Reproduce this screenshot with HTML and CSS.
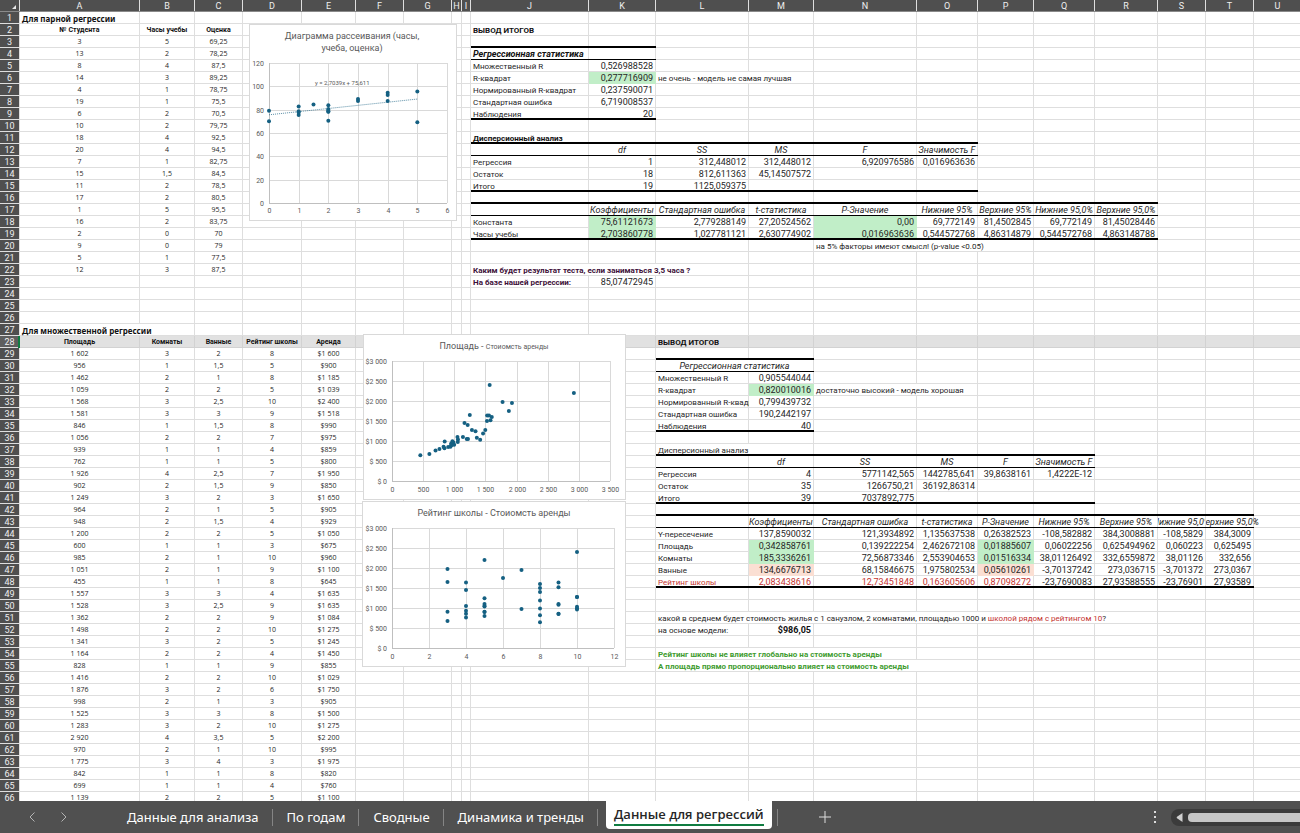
FILE: index.html
```html
<!DOCTYPE html>
<html lang="ru">
<head>
<meta charset="utf-8">
<title>Данные для регрессий</title>
<link rel="stylesheet" href="styles.css">
</head>
<body>
<div class="workbook">
  <main class="sheet">
    <table class="grid">
      <colgroup id="cols"></colgroup>
      <thead><tr id="letters"></tr></thead>
      <tbody id="rows"></tbody>
    </table>
    <svg class="chart chart-study" id="chart-study" width="208" height="197" role="img" aria-label="Диаграмма рассеивания"></svg>
    <svg class="chart chart-area" id="chart-area" width="263" height="166" role="img" aria-label="Площадь и аренда"></svg>
    <svg class="chart chart-rating" id="chart-rating" width="264" height="166" role="img" aria-label="Рейтинг школы и аренда"></svg>
  </main>
  <footer class="bar">
    <div class="arrows">
      <button class="arrow" aria-label="Назад"><svg width="8" height="12" viewBox="0 0 8 12"><path d="M6.500 1.500L2 6l4.500 4.500"/></svg></button>
      <button class="arrow" aria-label="Вперёд"><svg width="8" height="12" viewBox="0 0 8 12"><path d="M1.500 1.500L6 6l-4.500 4.500"/></svg></button>
    </div>
    <div class="tabs" role="tablist">
      <button class="tab" role="tab">Данные для анализа</button>
      <button class="tab" role="tab">По годам</button>
      <button class="tab" role="tab">Сводные</button>
      <button class="tab" role="tab">Динамика и тренды</button>
      <button class="tab-active" role="tab" aria-selected="true"><span class="tab-label">Данные для регрессий</span></button>
    </div>
    <button class="add" aria-label="Новый лист"><svg width="12" height="12" viewBox="0 0 12 12"><path d="M6 0v12M0 6h12"/></svg></button>
    <div class="dots"><i></i><i></i><i></i></div>
    <div class="scroll">
      <svg width="7" height="9" viewBox="0 0 7 9"><path d="M6.500 0v9L1 5.200Q.3 4.500 1 3.800z"/></svg>
      <div class="thumb"></div>
    </div>
  </footer>
</div>
<script src="script.js"></script>
</body>
</html>
```
FILE: styles.css
```css
* { box-sizing: border-box; }
body { margin: 0; font-family: Roboto, "Liberation Sans", sans-serif; color: #262626; background: #fff; }
button { border: 0; padding: 0; background: none; color: inherit; font: inherit; }
.workbook { display: flex; flex-direction: column; height: 100vh; overflow: hidden; }
.sheet { position: relative; flex: 1; min-height: 0; overflow: hidden; }

.grid { table-layout: fixed; width: 1302px; border-collapse: separate; border-spacing: 0; font: 8px/11px Roboto, sans-serif; }
.grid th, .grid td {
  --line: #dedede;
  --rule: var(--line);
  --weight: 1px;
  height: 12px; padding: 1px 1px 0 2px; overflow: hidden; white-space: nowrap;
  background-image: linear-gradient(var(--rule), var(--rule)), linear-gradient(var(--line), var(--line));
  background-position: 0 100%, 100% 0;
  background-size: 100% var(--weight), 1px 100%;
  background-repeat: no-repeat;
}
.grid th { padding: 0 1px 0 0; background-color: #4f4f4f; color: #f0f0f0; font: 9px/12px Roboto, sans-serif; text-align: center; }
.grid thead th { --rule: #8a8a8a; }
.corner { position: relative; }
.corner::after { content: ""; position: absolute; right: 4px; bottom: 3px; border: 2px solid #e8e8e8; border-top-color: transparent; border-left-color: transparent; }
.grid tr.selected td { --line: #d2d2d2; background-color: #e1e1e1; }
.grid tr.selected th { background-color: #5e5e5e; box-shadow: inset -2px 0 0 #107c41; }

.grid td.num { text-align: right; padding-right: 3px; font-size: 9px; }
.grid td.small { text-align: center; font: 7px/10px "Open Sans", sans-serif; padding: 0 1px 1px 0; }
.grid td.small.bold { font-family: Roboto, sans-serif; }
.grid td.head { font: 700 8px/11px "Noto Sans", sans-serif; color: #111; }
.grid td.bold { font-weight: 700; color: #111; }
.grid td.italic { font-size: 9px; font-style: italic; }
.grid td.center { text-align: center; padding: 1px 1px 0 0; }
.grid td.plum { color: #3d1038; }
.grid td.red, .red { color: #c5332f; }
.grid td.green { color: #3f9c30; }
.grid td.good { --line: #c1eec8; background-color: #c1eec8; }
.grid td.warn { --line: #fbdfd3; background-color: #fbdfd3; }
.grid td.thin { --rule: #000; }
.grid td.thick { --rule: #000; --weight: 2px; }
.clip { display: flex; justify-content: center; overflow: hidden; }
.grid td.spill { overflow: visible; }
.grid td.spill .clip { overflow: visible; clip-path: inset(0 -12px 0 0); }

.chart { position: absolute; background: #fff; border: 1px solid #d9d9d9; font: 7px Roboto, sans-serif; fill: #595959; }
.chart-study { left: 249px; top: 24px; }
.chart-area { left: 363px; top: 334px; }
.chart-rating { left: 362px; top: 501px; }
.chart .title { font-size: 9px; text-anchor: middle; }
.chart .sub { font-size: 7px; }
.chart .formula { font-size: 6px; }
.chart .gridline { stroke: #d9d9d9; }
.chart .axis { stroke: #bfbfbf; }
.chart .dot { fill: #156082; }
.chart .trend { stroke: #156082; stroke-dasharray: 1 1; opacity: .7; }
.chart .xlab { text-anchor: middle; }
.chart .ylab { text-anchor: end; }

.bar { display: flex; align-items: stretch; flex: none; height: 32px; background: #505050; color: #fff; font: 13px "Noto Sans", sans-serif; }
.arrows { display: flex; gap: 24px; padding-left: 28px; width: 113px; }
.arrow svg { display: block; fill: none; stroke: #b4b4b4; }
.tabs { display: flex; }
.tab, .add { position: relative; padding: 0 14px; }
.tab::after, .add::before { content: ""; position: absolute; right: 0; top: 8px; height: 17px; border-right: 1px solid #858585; }
.tab-active { height: 28px; margin-left: 8px; padding: 0 8px; border-radius: 0 0 4px 4px; background: #fff; color: #262626; font-family: "Open Sans", sans-serif; font-weight: 600; }
.tab-label { display: block; height: 22px; line-height: 20px; border-bottom: 2px solid #107c41; }
.add { margin-left: 5px; padding: 0 0 0 42px; }
.add::before { right: auto; left: 0; }
.add svg { display: block; stroke: #dcdcdc; }
.dots { display: flex; flex-direction: column; justify-content: center; gap: 3px; margin-left: auto; padding-right: 15px; }
.dots i { width: 2px; height: 2px; background: #dcdcdc; }
.scroll { display: flex; align-items: center; gap: 5px; align-self: center; width: 129px; height: 17px; padding-left: 5px; border-radius: 8px 0 0 8px; background: #3b3b3b; }
.scroll svg { fill: #d0d0d0; }
.thumb { flex: 1; height: 9px; border-radius: 4px 0 0 4px; background: #c6c6c6; }
```
FILE: script.js
```js
const LETTERS = 'ABCDEFGHIJKLMNOPQRSTU';
const WIDTHS = [120, 55, 48, 59, 54, 48, 48, 10, 9, 118, 67, 93, 65, 103, 61, 56, 61, 63, 48, 48, 48];

// student, hours, grade
const study = `3 5 69,25|13 2 78,25|8 4 87,5|14 3 89,25|4 1 78,75|19 1 75,5|6 2 70,5|10 2 79,75|18 4 92,5|20 4 94,5
7 1 82,75|15 1,5 84,5|11 2 78,5|17 2 80,5|1 5 95,5|16 2 83,75|2 0 70|9 0 79|5 1 77,5|12 3 87,5`
  .split(/[|\n]/).map(r => r.split(' '));

// area, rooms, baths, school rating, rent
const rent = `1602 3 2 8 1600|956 1 1,5 5 900|1462 2 1 8 1185|1059 2 2 5 1039|1568 3 2,5 10 2400|1581 3 3 9 1518
846 1 1,5 8 990|1056 2 2 7 975|939 1 1 4 859|762 1 1 5 800|1926 4 2,5 7 1950|902 2 1,5 9 850
1249 3 2 3 1650|964 2 1 5 905|948 2 1,5 4 929|1200 2 2 5 1050|600 1 1 3 675|985 2 1 10 960
1051 2 1 9 1100|455 1 1 8 645|1557 3 3 4 1635|1528 3 2,5 9 1635|1362 2 2 9 1084|1498 2 2 10 1275
1341 3 2 5 1245|1164 2 2 4 1450|828 1 1 9 855|1416 2 2 10 1029|1876 3 2 6 1750|998 2 1 3 905
1525 3 3 8 1500|1283 3 2 10 1275|2920 4 3,5 5 2200|970 2 1 10 995|1775 3 4 3 1975|842 1 1 8 820
699 1 1 4 760|1139 2 2 5 1100|1215 2 2 8 1400|1220 2 2 4 1050`
  .split(/[|\n]/).map(r => r.split(' '));

const group = s => s.replace(/\B(?=(\d{3})+$)/g, ' ');
const number = s => parseFloat(s.replace(',', '.'));

const cells = {};
const put = (ref, text, cls = '', span = 1) => { cells[ref] = { text, cls, span }; };
const putRow = (row, start, texts, cls) => texts.forEach((t, i) => {
  if (t) put(LETTERS[LETTERS.indexOf(start) + i] + row, t, cls);
});

put('A1', 'Для парной регрессии', 'head');
putRow(2, 'A', ['№ Студента', 'Часы учебы', 'Оценка'], 'small bold');
study.forEach((r, i) => putRow(i + 3, 'A', r, 'small'));
put('A27', 'Для множественной регрессии', 'head', 2);
putRow(28, 'A', ['Площадь', 'Комнаты', 'Ванные', 'Рейтинг школы', 'Аренда'], 'small bold');
rent.slice(0, 38).forEach((r, i) =>
  putRow(i + 29, 'A', [group(r[0]), r[1], r[2], r[3], '$' + group(r[4])], 'small'));

put('J2', 'ВЫВОД ИТОГОВ', 'bold');
put('J4', 'Регрессионная статистика', 'bold italic');
[['Множественный R', '0,526988528'], ['R-квадрат', '0,277716909'], ['Нормированный R-квадрат', '0,237590071'],
 ['Стандартная ошибка', '6,719008537'], ['Наблюдения', '20']].forEach(([a, b], i) => {
  put('J' + (i + 5), a);
  put('K' + (i + 5), b, i === 1 ? 'num good' : 'num');
});
put('L6', 'не очень - модель не самая лучшая', '', 2);
put('J11', 'Дисперсионный анализ', 'bold');
putRow(12, 'K', ['df', 'SS', 'MS', 'F', 'Значимость F'], 'italic center');
['Регрессия', 'Остаток', 'Итого'].forEach((t, i) => put('J' + (i + 13), t));
putRow(13, 'K', ['1', '312,448012', '312,448012', '6,920976586', '0,016963636'], 'num');
putRow(14, 'K', ['18', '812,611363', '45,14507572'], 'num');
putRow(15, 'K', ['19', '1125,059375'], 'num');
putRow(17, 'K', ['Коэффициенты', 'Стандартная ошибка', 't-статистика', 'P-Значение', 'Нижние 95%', 'Верхние 95%', 'Нижние 95,0%', 'Верхние 95,0%'], 'italic center');
put('J18', 'Константа');
put('J19', 'Часы учебы');
putRow(18, 'K', ['75,61121673', '2,779288149', '27,20524562', '0,00', '69,772149', '81,4502845', '69,772149', '81,45028446'], 'num');
putRow(19, 'K', ['2,703860778', '1,027781121', '2,630774902', '0,016963636', '0,544572768', '4,86314879', '0,544572768', '4,863148788'], 'num');
put('N20', 'на 5% факторы имеют смысл! (p-value &lt;0.05)', '', 3);
put('J22', 'Каким будет результат теста, если заниматься 3,5 часа ?', 'bold plum', 3);
put('J23', 'На базе нашей регрессии:', 'bold plum');
put('K23', '85,07472945', 'num');

put('L28', 'ВЫВОД ИТОГОВ', 'bold');
put('L30', 'Регрессионная статистика', 'italic center', 2);
[['Множественный R', '0,905544044'], ['R-квадрат', '0,820010016'], ['Нормированный R-квадрат', '0,799439732'],
 ['Стандартная ошибка', '190,2442197'], ['Наблюдения', '40']].forEach(([a, b], i) => {
  put('L' + (i + 31), a);
  put('M' + (i + 31), b, i === 1 ? 'num good' : 'num');
});
put('N32', 'достаточно высокий - модель хорошая', '', 2);
put('L37', 'Дисперсионный анализ', '', 2);
putRow(38, 'M', ['df', 'SS', 'MS', 'F', 'Значимость F'], 'italic center');
['Регрессия', 'Остаток', 'Итого'].forEach((t, i) => put('L' + (i + 39), t));
putRow(39, 'M', ['4', '5771142,565', '1442785,641', '39,8638161', '1,4222E-12'], 'num');
putRow(40, 'M', ['35', '1266750,21', '36192,86314'], 'num');
putRow(41, 'M', ['39', '7037892,775'], 'num');
putRow(43, 'M', ['Коэффициенты', 'Стандартная ошибка', 't-статистика', 'P-Значение', 'Нижние 95%', 'Верхние 95%'], 'italic center');
put('S43', '<div class="clip">Нижние 95,0%</div>', 'italic center');
put('T43', '<div class="clip">Верхние 95,0%</div>', 'italic center spill');
['Y-пересечение', 'Площадь', 'Комнаты', 'Ванные', 'Рейтинг школы'].forEach((t, i) => put('L' + (i + 44), t));
putRow(44, 'M', ['137,8590032', '121,3934892', '1,135637538', '0,26382523', '-108,582882', '384,3008881', '-108,5829', '384,3009'], 'num');
putRow(45, 'M', ['0,342858761', '0,139222254', '2,462672108', '0,01885607', '0,06022256', '0,625494962', '0,060223', '0,625495'], 'num');
putRow(46, 'M', ['185,3336261', '72,56873346', '2,553904653', '0,01516334', '38,01126492', '332,6559872', '38,01126', '332,656'], 'num');
putRow(47, 'M', ['134,6676713', '68,15846675', '1,975802534', '0,05610261', '-3,70137242', '273,036715', '-3,701372', '273,0367'], 'num');
putRow(48, 'M', ['2,083438616', '12,73451848', '0,163605606', '0,87098272', '-23,7690083', '27,93588555', '-23,76901', '27,93589'], 'num');
['L48', 'M48', 'N48', 'O48', 'P48'].forEach(r => { cells[r].cls += ' red'; });
['K18', 'K19', 'N18', 'N19', 'M45', 'M46', 'P45', 'P46'].forEach(r => { cells[r].cls += ' good'; });
['M47', 'P47'].forEach(r => { cells[r].cls += ' warn'; });
put('L51', 'какой в среднем будет стоимость жилья с 1 санузлом, 2 комнатами, площадью 1000 и <span class="red">школой рядом с рейтингом 10</span>?', '', 7);
put('L52', 'на основе модели:');
put('M52', '$986,05', 'num bold');
put('L54', 'Рейтинг школы не влияет глобально на стоимость аренды', 'bold green', 3);
put('L55', 'А площадь прямо пропорционально влияет на стоимость аренды', 'bold green', 4);

// black rules under a row: [row, first column, last column, weight]
const rules = [
  [3, 'J', 'K', 'thick'], [4, 'J', 'K', 'thin'], [9, 'J', 'K', 'thick'],
  [11, 'J', 'O', 'thick'], [12, 'J', 'O', 'thin'], [15, 'J', 'O', 'thick'],
  [16, 'J', 'R', 'thick'], [17, 'J', 'R', 'thin'], [19, 'J', 'R', 'thick'],
  [29, 'L', 'M', 'thick'], [30, 'L', 'M', 'thin'], [35, 'L', 'M', 'thick'],
  [37, 'L', 'Q', 'thick'], [38, 'L', 'Q', 'thin'], [41, 'L', 'Q', 'thick'],
  [42, 'L', 'T', 'thick'], [43, 'L', 'T', 'thin'], [48, 'L', 'T', 'thick']
];
const rule = (row, col) => {
  const hit = rules.find(r => r[0] === row && col >= r[1] && col <= r[2]);
  return hit ? ' ' + hit[3] : '';
};

document.getElementById('cols').innerHTML = [20, ...WIDTHS].map(w => `<col style="width:${w}px">`).join('');
document.getElementById('letters').innerHTML = '<th class="corner"></th>' + [...LETTERS].map(l => `<th scope="col">${l}</th>`).join('');
let body = '';
for (let row = 1; row <= 66; row++) {
  body += `<tr${row === 28 ? ' class="selected"' : ''}><th scope="row">${row}</th>`;
  for (let i = 0; i < LETTERS.length;) {
    const col = LETTERS[i];
    const c = cells[col + row] || { text: '', cls: '', span: 1 };
    const cls = (c.cls + rule(row, col)).trim();
    body += `<td${cls ? ` class="${cls}"` : ''}${c.span > 1 ? ` colspan="${c.span}"` : ''}>${c.text}</td>`;
    i += c.span;
  }
  body += '</tr>';
}
document.getElementById('rows').innerHTML = body;

// Scatter chart; plot is the inner rectangle in chart coordinates
function scatter(id, { plot: [x0, y0, x1, y1], xMax, xStep, yMax, yStep, points, title, xText = String, yText = String, labelY, trend = '' }) {
  const px = x => x0 + (x1 - x0) * x / xMax;
  const py = y => y1 - (y1 - y0) * y / yMax;
  let out = title;
  for (let x = 0; x <= xMax; x += xStep) {
    const g = Math.round(px(x)) + 0.5;
    out += `<path class="gridline" d="M${g} ${y0}V${y1}"/><text class="xlab" x="${g}" y="${labelY}">${xText(x)}</text>`;
  }
  for (let y = 0; y <= yMax; y += yStep) {
    const g = Math.round(py(y)) + 0.5;
    out += `<path class="${y ? 'gridline' : 'axis'}" d="M${x0} ${g}H${x1}"/><text class="ylab" x="${x0 - 5}" y="${g + 2}">${yText(y)}</text>`;
  }
  out += `<path class="axis" d="M${x0 + 0.5} ${y0}V${y1}"/>`;
  if (trend) out += `<path class="trend" d="M${px(0)} ${py(75.6)}L${px(5)} ${py(89.1)}"/>` + trend;
  points.forEach(([x, y]) => { out += `<circle class="dot" cx="${px(x)}" cy="${py(y)}" r="2"/>`; });
  document.getElementById(id).innerHTML = out;
}
const money = y => (y < 1000 ? '$ ' : '$') + group(String(y));
scatter('chart-study', {
  plot: [19, 38, 197, 178], xMax: 6, xStep: 1, yMax: 120, yStep: 20, labelY: 188,
  points: study.map(r => [number(r[1]), number(r[2])]),
  title: '<text class="title" x="102" y="14">Диаграмма рассеивания (часы,</text><text class="title" x="102" y="26">учеба, оценка)</text>',
  trend: '<text class="formula" x="65" y="60">y = 2,7039x + 75,611</text>'
});
scatter('chart-area', {
  plot: [28, 26, 246, 146], xMax: 3500, xStep: 500, yMax: 3000, yStep: 500, labelY: 157,
  points: rent.map(r => [+r[0], +r[4]]), xText: x => group(String(x)), yText: money,
  title: '<text class="title" x="130" y="14">Площадь - <tspan class="sub">Стоиомсть аренды</tspan></text>'
});
scatter('chart-rating', {
  plot: [29, 26, 251, 146], xMax: 12, xStep: 2, yMax: 3000, yStep: 500, labelY: 157,
  points: rent.map(r => [+r[3], +r[4]]), yText: money,
  title: '<text class="title" x="131" y="14">Рейтинг школы - Стоиомсть аренды</text>'
});
```
